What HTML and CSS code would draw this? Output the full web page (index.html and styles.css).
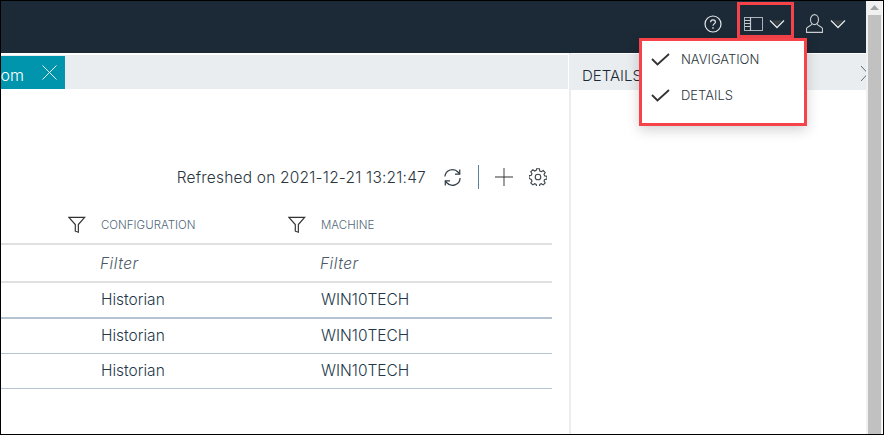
FILE: index.html
```html
<!DOCTYPE html>
<html lang="en">
<head>
<meta charset="utf-8">
<title>Details</title>
<link rel="stylesheet" href="styles.css">
</head>
<body>
<div class="app">
  <div class="page">
    <header class="topbar">
      <svg class="ic-help" width="18" height="18" viewBox="0 0 18 18" fill="none" stroke="#e4e8ea" stroke-width="1.2"><circle cx="9" cy="9" r="8"/><path d="M6.6 7.2C6.6 5.700 7.700 4.900 9 4.900s2.400.8 2.400 2.100c0 1.900-2.400 1.900-2.400 3.800"/><path d="M9 12.200v1.500" stroke-width="1.400"/></svg>
      <div class="layout-btn">
        <svg width="19" height="14" viewBox="0 0 19 14" fill="none" stroke="#aab3b9" stroke-width="1"><rect x=".5" y=".5" width="18" height="13"/><path d="M6.500 0v14M.5 3.500h6M.5 6.500h6M.5 9.500h6" stroke="#c4cacd" stroke-width="1.200"/></svg>
        <svg class="chev" width="16" height="10" viewBox="0 0 16 10" fill="#3b4045" stroke="none"><path d="M3 1.500h10L8 6.500z"/><path d="M1 1.500l7 7 7-7" fill="none" stroke="#e4e8ea" stroke-width="1.300"/></svg>
      </div>
      <svg class="ic-user" width="17" height="19" viewBox="0 0 17 19" fill="none" stroke="#c9ced2" stroke-width="1.100"><ellipse cx="8.500" cy="5.600" rx="4" ry="5"/><path d="M5.800 9.800c-.2 2-4.300 2.600-5.300 4.600v4h16v-4c-1-2-5.100-2.600-5.300-4.600"/></svg>
      <svg class="chev chev-user" width="16" height="10" viewBox="0 0 16 10" fill="#3b4045" stroke="none"><path d="M3 1.500h10L8 6.500z"/><path d="M1 1.500l7 7 7-7" fill="none" stroke="#e4e8ea" stroke-width="1.300"/></svg>
    </header>
    <div class="content">
      <section class="left">
        <div class="tabbar">
          <div class="tab">
            <span class="tab-text">com</span>
            <svg width="15" height="15" viewBox="0 0 15 15" stroke="#fff" stroke-width=".9"><path d="M.5.5l14 14M14.500.5l-14 14"/></svg>
          </div>
        </div>
        <div class="toolbar">
          <span class="refreshed">Refreshed on 2021-12-21 13:21:47</span>
          <svg class="ic-refresh" width="19" height="19" viewBox="0 0 20 20" fill="none" stroke="#333d44" stroke-width="1.300"><path d="M2 9a8 8 0 0 1 14-4.500l1.500 1.800"/><path d="M18 10.500a8 8 0 0 1-14 5L2.500 13.700"/><path d="M17.600 1.500v5h-5M2.400 18.500v-5h5"/></svg>
          <span class="vline"></span>
          <svg class="ic-plus" width="18" height="18" viewBox="0 0 18 18"><path d="M9 0v18" stroke="#777" stroke-width="1.400"/><path d="M0 9h18" stroke="#333" stroke-width="1"/></svg>
          <svg class="ic-gear" width="18" height="18" viewBox="0 0 18 18" fill="none" stroke="#3b444a" stroke-width="1.100"><circle cx="9" cy="9" r="2.800"/><path d="M7.600.8h2.800l.4 2.200 1.500.7 1.900-1.200 2 2-1.200 1.900.7 1.500 2.200.4v2.800l-2.200.4-.7 1.500 1.200 1.900-2 2-1.900-1.200-1.500.7-.4 2.200H7.600l-.4-2.200-1.500-.7-1.900 1.200-2-2 1.200-1.900-.7-1.500L.1 10.400V7.600l2.200-.4.7-1.500-1.200-1.900 2-2 1.900 1.200 1.500-.7z"/></svg>
        </div>
        <div class="table">
          <div class="row row-head">
            <div class="head-cell">
              <svg class="ic-filter" width="18" height="18" viewBox="0 0 20 19" fill="none" stroke="#333" stroke-width="1.300"><path d="M1 1h17.500l-7 8v8.600l-3.400-1.200V9z"/></svg>
              <span>CONFIGURATION</span>
            </div>
            <div class="head-cell">
              <svg class="ic-filter" width="18" height="18" viewBox="0 0 20 19" fill="none" stroke="#333" stroke-width="1.300"><path d="M1 1h17.500l-7 8v8.600l-3.400-1.200V9z"/></svg>
              <span>MACHINE</span>
            </div>
          </div>
          <div class="row row-filter"><span class="cell">Filter</span><span class="cell">Filter</span></div>
          <div class="row row-data row-thick"><span class="cell">Historian</span><span class="cell">WIN10TECH</span></div>
          <div class="row row-data"><span class="cell">Historian</span><span class="cell">WIN10TECH</span></div>
          <div class="row row-data"><span class="cell">Historian</span><span class="cell">WIN10TECH</span></div>
        </div>
      </section>
      <aside class="right">
        <div class="details-head">
          <span>DETAILS</span>
          <svg class="ic-collapse" width="5" height="15" viewBox="0 0 5 15" fill="none" stroke="#5d6a75" stroke-width="1"><path d="M0 0l7 7.500-7 7.500"/></svg>
        </div>
      </aside>
    </div>
  </div>
  <div class="scrollbar">
    <svg class="arrow" width="9" height="5" viewBox="0 0 9 5"><path d="M4.500 0L9 5H0z" fill="#a3a3a3"/></svg>
    <div class="thumb"></div>
  </div>
  <div class="menu">
    <div class="menu-item"><svg width="19" height="13" viewBox="0 0 19 13" fill="none" stroke="#333" stroke-width="1.800"><path d="M1 6l5.500 5.500L18 1"/></svg><span>NAVIGATION</span></div>
    <div class="menu-item"><svg width="19" height="13" viewBox="0 0 19 13" fill="none" stroke="#333" stroke-width="1.800"><path d="M1 6l5.500 5.500L18 1"/></svg><span>DETAILS</span></div>
  </div>
</div>
</body>
</html>
```
FILE: styles.css
```css
* { box-sizing: border-box; }
html, body { margin: 0; padding: 0; background: #fff; overflow: hidden; }
body { font-family: "Inter", "Liberation Sans", sans-serif; }
.app {
  position: relative;
  width: 884px;
  height: 435px;
  display: flex;
  border: 1px solid #000;
  overflow: hidden;
  background: #fff;
}
.page { width: 865px; display: flex; flex-direction: column; }
.topbar {
  height: 52px;
  flex: none;
  background: #1b2a36;
  display: flex;
  align-items: flex-start;
  padding: 1px 20px 0 0;
  justify-content: flex-end;
}
.topbar svg { display: block; }
.ic-help { margin-top: 13px; }
.layout-btn {
  width: 57px;
  height: 36px;
  margin-left: 15px;
  border: 3px solid #f6434a;
  display: flex;
  align-items: center;
  padding: 7px 0 0 4px;
  gap: 6px;
}
.chev { flex: none; }
.ic-user { margin: 12px 0 0 12px; }
.chev-user { margin: 17px 0 0 7px; }
.content { flex: 1; display: flex; min-height: 0; }
.left { width: 568px; flex: none; display: flex; flex-direction: column; }
.tabbar {
  height: 34px;
  margin: 2px 1px 0 0;
  background: #e9edf0;
  display: flex;
  flex: none;
}
.tab {
  width: 64px;
  margin-top: 1px;
  background: #0095ad;
  display: flex;
  align-items: center;
  justify-content: flex-end;
  overflow: hidden;
  padding-right: 8px;
  gap: 18px;
  color: #fff;
  font-size: 16px;
  font-weight: 300;
}
.tab svg { flex: none; }
.tab-text { flex: none; padding-top: 5px; }
.toolbar {
  margin-top: 74px;
  height: 28px;
  padding-right: 22px;
  display: flex;
  align-items: center;
  justify-content: flex-end;
  flex: none;
}
.refreshed { font-size: 15.500px; font-weight: 300; color: #2a3640; letter-spacing: .2px; }
.ic-refresh { margin-left: 17px; }
.vline { width: 1px; height: 24px; background: #5f8299; margin-left: 16px; }
.ic-plus { margin-left: 16px; }
.ic-gear { margin-left: 16px; }
.table { width: 551px; margin-top: 13px; display: flex; flex-direction: column; flex: none; }
.row { display: flex; align-items: center; padding-left: 100px; border-bottom: 1px solid #b5c4d0; flex: none; }
.row-head { height: 41px; padding: 2px 0 0 67px; border-bottom: 2px solid #e0e0e0; }
.head-cell { width: 220px; display: flex; align-items: center; font-size: 11.500px; font-weight: 300; color: #51687a; }
.ic-filter { margin-right: 15px; flex: none; }
.row-filter { height: 38px; border-bottom: 2px solid #e0e0e0; }
.row-filter .cell { font-style: italic; color: #4a5a66; padding-top: 1px; margin-left: -1px; margin-right: 1px; letter-spacing: .5px; }
.row-data { height: 35px; padding-bottom: 2px; }
.row-thick { height: 36px; border-bottom-width: 2px; }
.cell { width: 220px; font-size: 15.500px; font-weight: 300; color: #22384a; }
.right { flex: 1; display: flex; flex-direction: column; border-left: 2px solid #e9edf0; }
.details-head {
  height: 36px;
  margin-top: 1px;
  background: #e9edf0;
  display: flex;
  align-items: flex-start;
  justify-content: space-between;
  padding: 12px 0 0 11px;
  font-size: 15px;
  font-weight: 300;
  color: #1b2a36;
}
.ic-collapse { margin-top: 0; }
.scrollbar {
  width: 17px;
  flex: none;
  background: #f1f1f1;
  display: flex;
  flex-direction: column;
  align-items: center;
  border-right: 1px solid #fff;
  padding-top: 4px;
}
.arrow { display: block; margin-left: 1px; }
.thumb { width: 13px; flex: 1; margin-top: 5px; margin-left: 1px; background: #c1c1c1; }
.menu {
  position: absolute;
  left: 638px;
  top: 37px;
  width: 168px;
  height: 88px;
  background: #fff;
  border: 3px solid #f6434a;
  box-shadow: 0 4px 12px rgba(0, 0, 0, .18);
  display: flex;
  flex-direction: column;
}
.menu-item { height: 36px; display: flex; align-items: center; padding-left: 9px; gap: 11px; font-size: 13px; font-weight: 300; color: #2a3640; flex: none; }
```
